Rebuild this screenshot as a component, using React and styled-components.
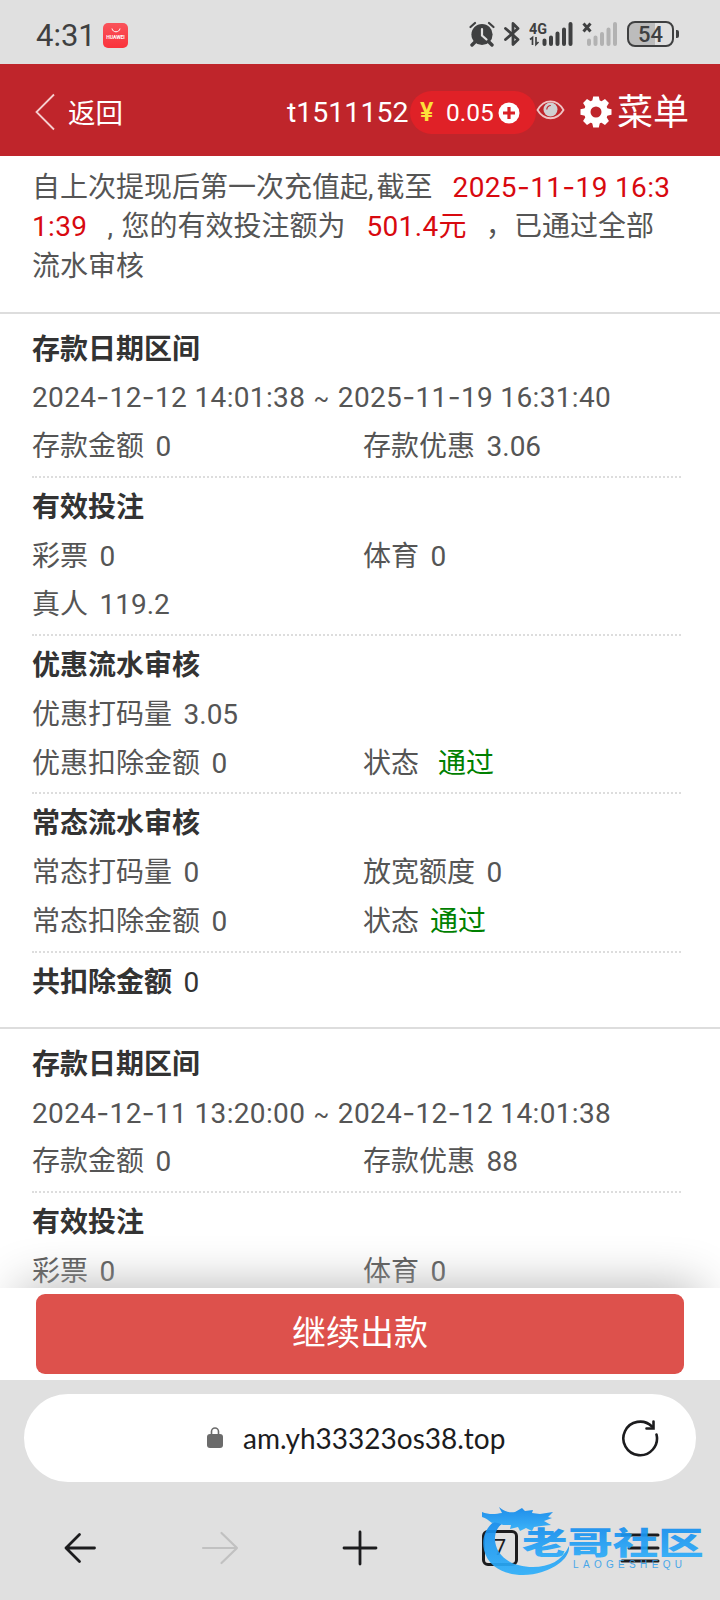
import React from "react";
import styled, { createGlobalStyle } from "styled-components";

const GlobalStyle = createGlobalStyle`
  * {
    box-sizing: border-box;
  }
  body {
    margin: 0;
    background: #fff;
    font-family: Roboto, "Noto Sans CJK SC", sans-serif;
  }
  svg {
    display: block;
    flex: none;
  }
`;

const records = [
  {
    from: "2024-12-12 14:01:38",
    to: "2025-11-19 16:31:40",
    deposit: "0",
    bonus: "3.06",
    groups: [
      {
        title: "有效投注",
        rows: [
          [{ label: "彩票", value: "0" }, { label: "体育", value: "0" }],
          [{ label: "真人", value: "119.2" }],
        ],
      },
      {
        title: "优惠流水审核",
        rows: [
          [{ label: "优惠打码量", value: "3.05" }],
          [{ label: "优惠扣除金额", value: "0" }, { label: "状态", value: "通过", pass: true, gap: 19 }],
        ],
      },
      {
        title: "常态流水审核",
        rows: [
          [{ label: "常态打码量", value: "0" }, { label: "放宽额度", value: "0" }],
          [{ label: "常态扣除金额", value: "0" }, { label: "状态", value: "通过", pass: true, gap: 11 }],
        ],
      },
    ],
    total: "0",
  },
  {
    from: "2024-12-11 13:20:00",
    to: "2024-12-12 14:01:38",
    deposit: "0",
    bonus: "88",
    groups: [
      {
        title: "有效投注",
        rows: [[{ label: "彩票", value: "0" }, { label: "体育", value: "0" }]],
      },
    ],
  },
];

function StatusBar() {
  return (
    <Status>
      <Clock>4:31</Clock>
      <AppBadge>
        <svg width="10" height="5" viewBox="0 0 10 5" fill="none" stroke="#fff" strokeWidth="1">
          <path d="M1 0.500c.6 4.400 7.400 4.400 8 0" />
        </svg>
        <BadgeName>HUAWEI</BadgeName>
      </AppBadge>
      <StatusIcons>
        <svg width="26" height="26" viewBox="0 0 26 26">
          <circle cx="13" cy="13.500" r="10.600" fill="#3f4041" />
          <path d="M6 21l-3 3M20 21l3 3" stroke="#3f4041" strokeWidth="3.400" strokeLinecap="round" />
          <path d="M1.500 6L6 2M24.500 6L20 2" stroke="#3f4041" strokeWidth="2.200" strokeLinecap="round" />
          <path d="M13 8v6.500l4.500 4" fill="none" stroke="#e0e0e0" strokeWidth="2.200" strokeLinecap="round" />
        </svg>
        <svg width="16" height="26" viewBox="0 0 16 26" fill="none" stroke="#3f4041" strokeWidth="2.800" strokeLinejoin="round" strokeLinecap="round">
          <path d="M1.500 7.500l12.500 11-5 5V2.500l5 5-12.500 11" />
        </svg>
        <svg width="44" height="26" viewBox="0 0 44 26">
          <text x="0" y="12.500" fontSize="14.500" fontWeight="700" fill="#3f4041" textLength="18" lengthAdjust="spacingAndGlyphs">4G</text>
          <path d="M1 18.500l2.500-2V24M7 16v7.500l2.500-2.500" fill="none" stroke="#3f4041" strokeWidth="1.700" />
          <path d="M15.500 19.500V23M22 16.500V23M28.500 12.500V23M35 8.500V23M41.500 3V23" stroke="#3f4041" strokeWidth="4" strokeLinecap="round" />
        </svg>
        <svg width="36" height="26" viewBox="0 0 36 26">
          <path d="M1.500 2.500l7 8M8.500 2.500l-7 8" stroke="#3f4041" strokeWidth="2.900" />
          <path d="M7 19.500V23M13.500 16.500V23M20 13V23M26.500 8.500V23M33 3V23" stroke="#b2b2b2" strokeWidth="4" strokeLinecap="round" />
        </svg>
        <Battery>54</Battery>
      </StatusIcons>
    </Status>
  );
}

function TopBar() {
  return (
    <Header>
      <Chevron width="20" height="38" viewBox="0 0 20 38" fill="none" stroke="#f6cfcf" strokeWidth="1.800">
        <path d="M19 1.500L1.500 19 19 36.500" />
      </Chevron>
      <Back>返回</Back>
      <User>t1511152</User>
      <Balance>
        <Yen>¥</Yen>
        <Amount>0.05</Amount>
        <svg width="22" height="22" viewBox="0 0 22 22">
          <circle cx="11" cy="11" r="10.500" fill="#fff" />
          <path d="M11 5v12M5 11h12" stroke="#d92027" strokeWidth="3.200" />
        </svg>
      </Balance>
      <svg width="29" height="20" viewBox="0 0 29 20">
        <path d="M1.500 10C8-1.500 21-1.500 27.500 10 21 21 8 21 1.500 10z" fill="none" stroke="#f0c4c5" strokeWidth="1.800" />
        <circle cx="14.500" cy="9.500" r="7" fill="#d0d0d2" />
        <path d="M10.800 9.500a4 4 0 0 1 4-4" fill="none" stroke="#bf252b" strokeWidth="1.200" />
      </svg>
      <Menu>
        <svg width="32" height="32" viewBox="0 0 32 32">
          <circle cx="16" cy="16" r="8.700" fill="none" stroke="#fff" strokeWidth="6.400" />
          {[0, 45, 90, 135, 180, 225, 270, 315].map((deg) => (
            <path key={deg} d="M12.200 5l1-4.500h5.600l1 4.500z" fill="#fff" transform={`rotate(${deg} 16 16)`} />
          ))}
        </svg>
        <MenuText>菜单</MenuText>
      </Menu>
    </Header>
  );
}

// Roboto's hyphen is too narrow between the date parts
function DateText({ children }) {
  return children.split("-").map((part, i) => (
    <React.Fragment key={i}>
      {i > 0 && <Dash>-</Dash>}
      {part}
    </React.Fragment>
  ));
}

function Item({ label, value, pass, gap }) {
  return (
    <Cell>
      {label}
      <Value $pass={pass} $gap={gap}>{value}</Value>
    </Cell>
  );
}

function Record({ data }) {
  return (
    <RecordBox>
      <Group>
        <Title>存款日期区间</Title>
        <DateRow>
          <DateText>{data.from}</DateText> <Tilde>~</Tilde> <DateText>{data.to}</DateText>
        </DateRow>
        <Row>
          <Item label="存款金额" value={data.deposit} />
          <Item label="存款优惠" value={data.bonus} />
        </Row>
      </Group>
      {data.groups.map((group) => (
        <Group key={group.title}>
          <Title>{group.title}</Title>
          {group.rows.map((row, i) => (
            <Row key={i}>
              {row.map((item) => (
                <Item key={item.label} {...item} />
              ))}
            </Row>
          ))}
        </Group>
      ))}
      {data.total && (
        <Total>
          共扣除金额<Value>{data.total}</Value>
        </Total>
      )}
    </RecordBox>
  );
}

function Watermark() {
  return (
    <Mark width="226" height="76" viewBox="0 0 226 76">
      <defs>
        <linearGradient id="markBlue" x1="0" y1="0" x2="0" y2="1">
          <stop offset="0" stopColor="#0f86ec" />
          <stop offset="1" stopColor="#2fb0fa" />
        </linearGradient>
      </defs>
      <g fill="url(#markBlue)">
        <path d="M34 9C12 13 0 28 4 46c6 25 38 29 58 22 16-5 28-15 27-26-7 15-20 21-36 21-24 0-39-13-38-30 1-11 9-17 22-19z" />
        <path d="M2 8c7 3 14 2 20 1l-3-6c6 5 11 6 16 5l7-4 3 3 8-1-1 3 8 1 13-2-5 5 4 1-8 3 7 4-10 1-7 1-2 4-6-3-6 3-2-4-8 2 1-4-8 0c-4-2-7-3-11-2-4-3-6-5-10-6z" />
        <text transform="translate(42 49.500) scale(1.500 1)" fontFamily="Noto Sans CJK SC" fontWeight="900" fontSize="30.300">老哥社区</text>
      </g>
      <text x="93" y="63.500" fontFamily="Liberation Sans" fontSize="10" fill="#3aa3ea" textLength="109">LAOGESHEQU</text>
    </Mark>
  );
}

function BrowserBar() {
  return (
    <Browser>
      <Address>
        <svg width="16" height="22" viewBox="0 0 16 22">
          <rect x="0" y="7" width="16" height="14" rx="3" fill="#6b6b6b" />
          <path d="M4.500 8V4.500a3.500 3.500 0 0 1 7 0V8" fill="none" stroke="#6b6b6b" strokeWidth="1.600" />
        </svg>
        <Url>am.yh33323os38.top</Url>
        <svg width="38" height="38" viewBox="0 0 38 38" fill="none" stroke="#1c1c1e" strokeWidth="2.600" strokeLinecap="round">
          <path d="M35.500 15.500A16.800 16.800 0 1 1 31 7.500" />
          <path d="M32.500 2.500v7h-7" />
        </svg>
      </Address>
      <Nav>
        <svg width="32" height="32" viewBox="0 0 32 32" fill="none" stroke="#1c1c1e" strokeWidth="2.800" strokeLinecap="round" strokeLinejoin="round">
          <path d="M30.500 16H2M15.500 2.500L2 16l13.500 13.500" />
        </svg>
        <svg width="38" height="34" viewBox="0 0 38 34" fill="none" stroke="#c1c1c1" strokeWidth="2.200" strokeLinecap="round" strokeLinejoin="round">
          <path d="M2 17h34M20.500 2L36 17 20.500 32" />
        </svg>
        <svg width="36" height="36" viewBox="0 0 36 36" stroke="#1c1c1e" strokeWidth="2.800" strokeLinecap="round">
          <path d="M2 18h32M18 2v32" />
        </svg>
        <Tabs>7</Tabs>
        <svg width="40" height="32" viewBox="0 0 40 32" stroke="#1c1c1e" strokeWidth="3" strokeLinecap="round">
          <path d="M2 3h36M9 16h29M2 29h36" />
        </svg>
      </Nav>
      <Watermark />
    </Browser>
  );
}

export default function App() {
  return (
    <Screen>
      <GlobalStyle />
      <StatusBar />
      <TopBar />
      <Content>
        <Notice>
          <div>
            自上次提现后第一次充值起<Comma $right={3}>,</Comma>截至
            <Red $left={20}>
              <DateText>2025-11-19 16:3</DateText>
            </Red>
          </div>
          <div>
            <Red>1:39</Red>
            <Comma $left={20} $right={8.5}>,</Comma>您的有效投注额为<Red $left={21}>501.4元</Red>
            <Comma $left={19}>，</Comma>已通过全部
          </div>
          <div>流水审核</div>
        </Notice>
        {records.map((record) => (
          <Record key={record.from} data={record} />
        ))}
      </Content>
      <Footer>
        <Submit>继续出款</Submit>
      </Footer>
      <BrowserBar />
    </Screen>
  );
}

const Screen = styled.div`
  display: flex;
  flex-direction: column;
  width: 720px;
  height: 1600px;
  overflow: hidden;
`;

const Status = styled.div`
  display: flex;
  align-items: center;
  height: 64px;
  padding: 6px 46px 0 36px;
  background: #e0e0e0;
`;

const Clock = styled.span`
  width: 67px;
  font-size: 31px;
  color: #3f4041;
`;

const AppBadge = styled.div`
  display: flex;
  flex-direction: column;
  align-items: center;
  width: 25px;
  height: 25px;
  padding-top: 5px;
  border-radius: 5px;
  background: linear-gradient(#f9535b, #fa323b);
`;

const BadgeName = styled.span`
  margin-top: 1px;
  font-size: 5px;
  line-height: 6px;
  font-weight: 700;
  color: #fff;
`;

const StatusIcons = styled.div`
  display: flex;
  align-items: center;
  gap: 9px;
  margin: -2px 0 0 auto;
`;

const Battery = styled.div`
  position: relative;
  width: 47px;
  height: 26px;
  border: 2px solid #3f4041;
  border-radius: 8px;
  background: linear-gradient(90deg, #bcbcbc 60%, #e0e0e0 60%);
  font-size: 22px;
  font-weight: 500;
  line-height: 23px;
  text-align: center;
  color: #3f4041;

  &::after {
    content: "";
    position: absolute;
    top: 7px;
    right: -7px;
    width: 3px;
    height: 8px;
    border-radius: 0 2px 2px 0;
    background: #3f4041;
  }
`;

const Header = styled.header`
  display: flex;
  align-items: center;
  height: 92px;
  padding: 0 31px 0 35px;
  background: #bf252b;
  color: #fff;
`;

const Chevron = styled.svg`
  margin-top: 3px;
`;

const Back = styled.span`
  margin: 1px 0 0 13px;
  font-size: 27.500px;
`;

const User = styled.span`
  width: 123px;
  margin: 4px 0 0 auto;
  font-size: 28.500px;
`;

const Balance = styled.div`
  display: flex;
  align-items: center;
  width: 126px;
  height: 43px;
  margin-top: 5px;
  padding-left: 10px;
  border-radius: 22px;
  background: #e02127;
`;

const Yen = styled.span`
  width: 26px;
  font-size: 25px;
  font-weight: 600;
  color: #fde03a;
`;

const Amount = styled.span`
  width: 52px;
  font-size: 24.500px;
`;

const Menu = styled.div`
  display: flex;
  align-items: center;
  gap: 5px;
  margin: 3px 0 0 15px;
`;

const MenuText = styled.span`
  font-size: 36px;
  line-height: 50px;
  padding-top: 2px;
`;

const Content = styled.main`
  height: 1132px;
  overflow: hidden;
  font-size: 28px;
  color: #555;
`;

const Notice = styled.div`
  height: 158px;
  padding: 12px 32px 0;
  border-bottom: 2px solid #ddd;
  line-height: 39.300px;
  white-space: nowrap;
`;

const Red = styled.span`
  margin-left: ${(p) => p.$left || 0}px;
  letter-spacing: 0.350px;
  color: #d8090f;
`;

const Comma = styled.span`
  margin-left: ${(p) => p.$left || 0}px;
  margin-right: ${(p) => p.$right || 0}px;
`;

const Dash = styled.span`
  font-family: Inter, sans-serif;
`;

const Tilde = styled.span`
  margin: 0 1px;
  font-size: 23px;
`;

const RecordBox = styled.section`
  padding-top: 10.500px;
  border-bottom: 2px solid #ddd;
`;

const Group = styled.div`
  margin: 0 39px 5px 32px;
  padding-bottom: 5px;
  border-bottom: 2px dotted #ddd;
`;

const Row = styled.div`
  display: grid;
  grid-template-columns: 331px 1fr;
  height: 48.750px;
  line-height: 50.750px;
`;

const Title = styled.div`
  height: 48.750px;
  line-height: 50.750px;
  font-weight: 700;
  color: #333;
`;

const DateRow = styled.div`
  height: 48.750px;
  line-height: 48px;
  letter-spacing: 0.350px;
  white-space: nowrap;
`;

const Cell = styled.div`
  white-space: nowrap;
`;

const Value = styled.span`
  margin-left: ${(p) => p.$gap || 11.5}px;
  color: ${(p) => (p.$pass ? "#008000" : "inherit")};
`;

const Total = styled(Title)`
  margin: 0 32px 21px;

  ${Value} {
    font-weight: 400;
  }
`;

const Footer = styled.div`
  position: relative;
  height: 92px;
  padding: 6px 36px;
  background: #fff;
  box-shadow: 0 -20px 50px -20px #b0b0b0;
`;

const Submit = styled.button`
  width: 100%;
  height: 80px;
  padding: 0 0 7px;
  border: 0;
  border-radius: 9px;
  background: #dd514c;
  font-family: inherit;
  font-size: 34px;
  color: #fff;
`;

const Browser = styled.div`
  position: relative;
  height: 220px;
  padding: 14px 10px 0;
  background: #e0e0e0;
`;

const Address = styled.div`
  display: flex;
  align-items: center;
  height: 88px;
  margin: 0 14px;
  padding: 0 37px 0 183px;
  border-radius: 44px;
  background: #fff;
`;

const Url = styled.span`
  flex: 1;
  margin-left: 20px;
  font-family: Lato, sans-serif;
  font-size: 28px;
  color: #1c1c1e;
`;

const Nav = styled.div`
  display: grid;
  grid-template-columns: repeat(5, 140px);
  align-items: center;
  justify-items: center;
  height: 131px;
`;

const Tabs = styled.div`
  width: 36px;
  height: 36px;
  border: 3px solid #1c1c1e;
  border-radius: 6px;
  font-size: 22px;
  line-height: 30px;
  text-align: center;
  color: #1c1c1e;
`;

const Mark = styled.svg`
  position: absolute;
  left: 480px;
  bottom: 20px;
  opacity: 0.920;
`;
